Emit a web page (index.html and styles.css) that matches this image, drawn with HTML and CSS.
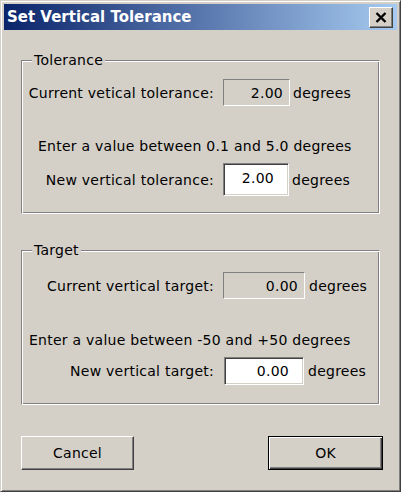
FILE: index.html
```html
<!DOCTYPE html>
<html lang="en">
<head>
<meta charset="utf-8">
<title>Set Vertical Tolerance</title>
<link rel="stylesheet" href="styles.css">
</head>
<body>
<div class="window">
  <div class="titlebar">
    <span class="title">Set Vertical Tolerance</span>
    <button class="close" type="button" aria-label="Close">
      <svg width="12" height="11" viewBox="0 0 12 11" aria-hidden="true">
        <path d="M1.5 1 L10.5 10 M10.5 1 L1.5 10" stroke="#000" stroke-width="2.4" fill="none"/>
      </svg>
    </button>
  </div>
  <div class="content">
    <fieldset class="group group-tol">
      <legend>Tolerance</legend>
      <div class="row row-cur">
        <span class="label">Current vetical tolerance:</span>
        <span class="field readonly w67">2.00</span>
        <span class="unit">degrees</span>
      </div>
      <div class="hint">Enter a value between 0.1 and 5.0 degrees</div>
      <div class="row row-new">
        <span class="label">New vertical tolerance:</span>
        <span class="field edit w66 h33">2.00</span>
        <span class="unit">degrees</span>
      </div>
    </fieldset>
    <fieldset class="group group-tgt">
      <legend>Target</legend>
      <div class="row row-cur">
        <span class="label">Current vertical target:</span>
        <span class="field readonly w82">0.00</span>
        <span class="unit u4">degrees</span>
      </div>
      <div class="hint">Enter a value between -50 and +50 degrees</div>
      <div class="row row-new">
        <span class="label">New vertical target:</span>
        <span class="field edit w80 h28 shift1">0.00</span>
        <span class="unit u4">degrees</span>
      </div>
    </fieldset>
    <div class="buttons">
      <button class="btn btn-cancel" type="button">Cancel</button>
      <button class="btn btn-ok" type="button">OK</button>
    </div>
  </div>
</div>
</body>
</html>
```

FILE: styles.css
```css
html, body {
  margin: 0;
  padding: 0;
  background: #d4d0c8;
}

body {
  font-family: "DejaVu Sans", Verdana, sans-serif;
  font-size: 14px;
  line-height: 16px;
  color: #000;
}

.window {
  box-sizing: border-box;
  width: 401px;
  height: 492px;
  background: #d4d0c8;
  border: 1px solid;
  border-color: #d4d0c8 #404040 #404040 #d4d0c8;
  box-shadow: inset 1px 1px #ffffff, inset -1px -1px #808080;
  padding: 3px;
  display: flex;
  flex-direction: column;
}

.titlebar {
  height: 26px;
  flex: 0 0 26px;
  background: linear-gradient(to right, #0a246a, #a6caf0);
  display: flex;
  align-items: center;
  justify-content: space-between;
  padding: 0 4px 0 3px;
}

.title {
  color: #fff;
  font-weight: bold;
  font-size: 15px;
  line-height: 18px;
  white-space: nowrap;
}

.close {
  box-sizing: border-box;
  width: 24px;
  height: 21px;
  padding: 0;
  margin: 0;
  background: #d4d0c8;
  border: 1px solid;
  border-color: #ffffff #404040 #404040 #ffffff;
  box-shadow: inset -1px -1px #808080;
  display: flex;
  align-items: center;
  justify-content: center;
}

.close svg {
  display: block;
}

.content {
  padding: 22px 17px 0 17px;
  display: flex;
  flex-direction: column;
  letter-spacing: 0.25px;
}

.group {
  margin: 0;
  padding: 0 0 17px 0;
  min-width: 0;
  border: 1px solid;
  border-color: #808080 #ffffff #ffffff #808080;
  box-shadow: inset 1px 1px #ffffff, inset -1px -1px #808080;
}

.group legend {
  margin-left: 10px;
  padding: 0 2px;
  background: #d4d0c8;
  line-height: 16px;
}

.group-tgt {
  margin-top: 28px;
  padding-bottom: 19px;
}

.row {
  display: flex;
  align-items: center;
}

.group-tol .row-cur { margin-top: 11px; }
.group-tol .hint { margin-top: 32px; padding-left: 16px; }
.group-tol .row-new { margin-top: 9px; }

.group-tgt .row-cur { margin-top: 14px; }
.group-tgt .hint { margin-top: 33px; padding-left: 7px; }
.group-tgt .row-new { margin-top: 9px; }

.label {
  box-sizing: border-box;
  flex: 0 0 201px;
  text-align: right;
  padding-right: 9px;
  white-space: nowrap;
}

.hint {
  white-space: nowrap;
}

.field {
  box-sizing: border-box;
  height: 27px;
  display: flex;
  align-items: center;
  justify-content: flex-end;
}

.readonly {
  background: #d4d0c8;
  border: 1px solid;
  border-color: #808080 #ffffff #ffffff #808080;
  padding-right: 6px;
}

.edit {
  background: #ffffff;
  border: 1px solid;
  border-color: #808080 #ffffff #ffffff #808080;
  box-shadow: inset 1px 1px #404040, inset -1px -1px #d4d0c8;
  padding-right: 14px;
  padding-bottom: 3px;
}

.w66 { width: 66px; }
.w67 { width: 67px; }
.w80 { width: 80px; }
.w82 { width: 82px; }
.h33 { height: 33px; }
.h28 { height: 28px; padding-bottom: 1px; }
.shift1 { margin-left: 1px; }

.unit {
  margin-left: 3px;
  white-space: nowrap;
}

.unit.u4 { margin-left: 4px; }

.buttons {
  width: 362px;
  margin-top: 31px;
  display: flex;
  justify-content: space-between;
}

.btn {
  box-sizing: border-box;
  height: 34px;
  margin: 0;
  padding: 0;
  font-family: "DejaVu Sans", Verdana, sans-serif;
  font-size: 14px;
  line-height: 16px;
  letter-spacing: 0.25px;
  color: #000;
  background: #d4d0c8;
}

.btn-cancel {
  width: 113px;
  border: 1px solid;
  border-color: #ffffff #404040 #404040 #ffffff;
  box-shadow: inset -1px -1px #808080;
}

.btn-ok {
  width: 115px;
  border: 1px solid #000;
  box-shadow: inset 1px 1px #ffffff, inset -1px -1px #404040, inset -2px -2px #808080;
}
```
